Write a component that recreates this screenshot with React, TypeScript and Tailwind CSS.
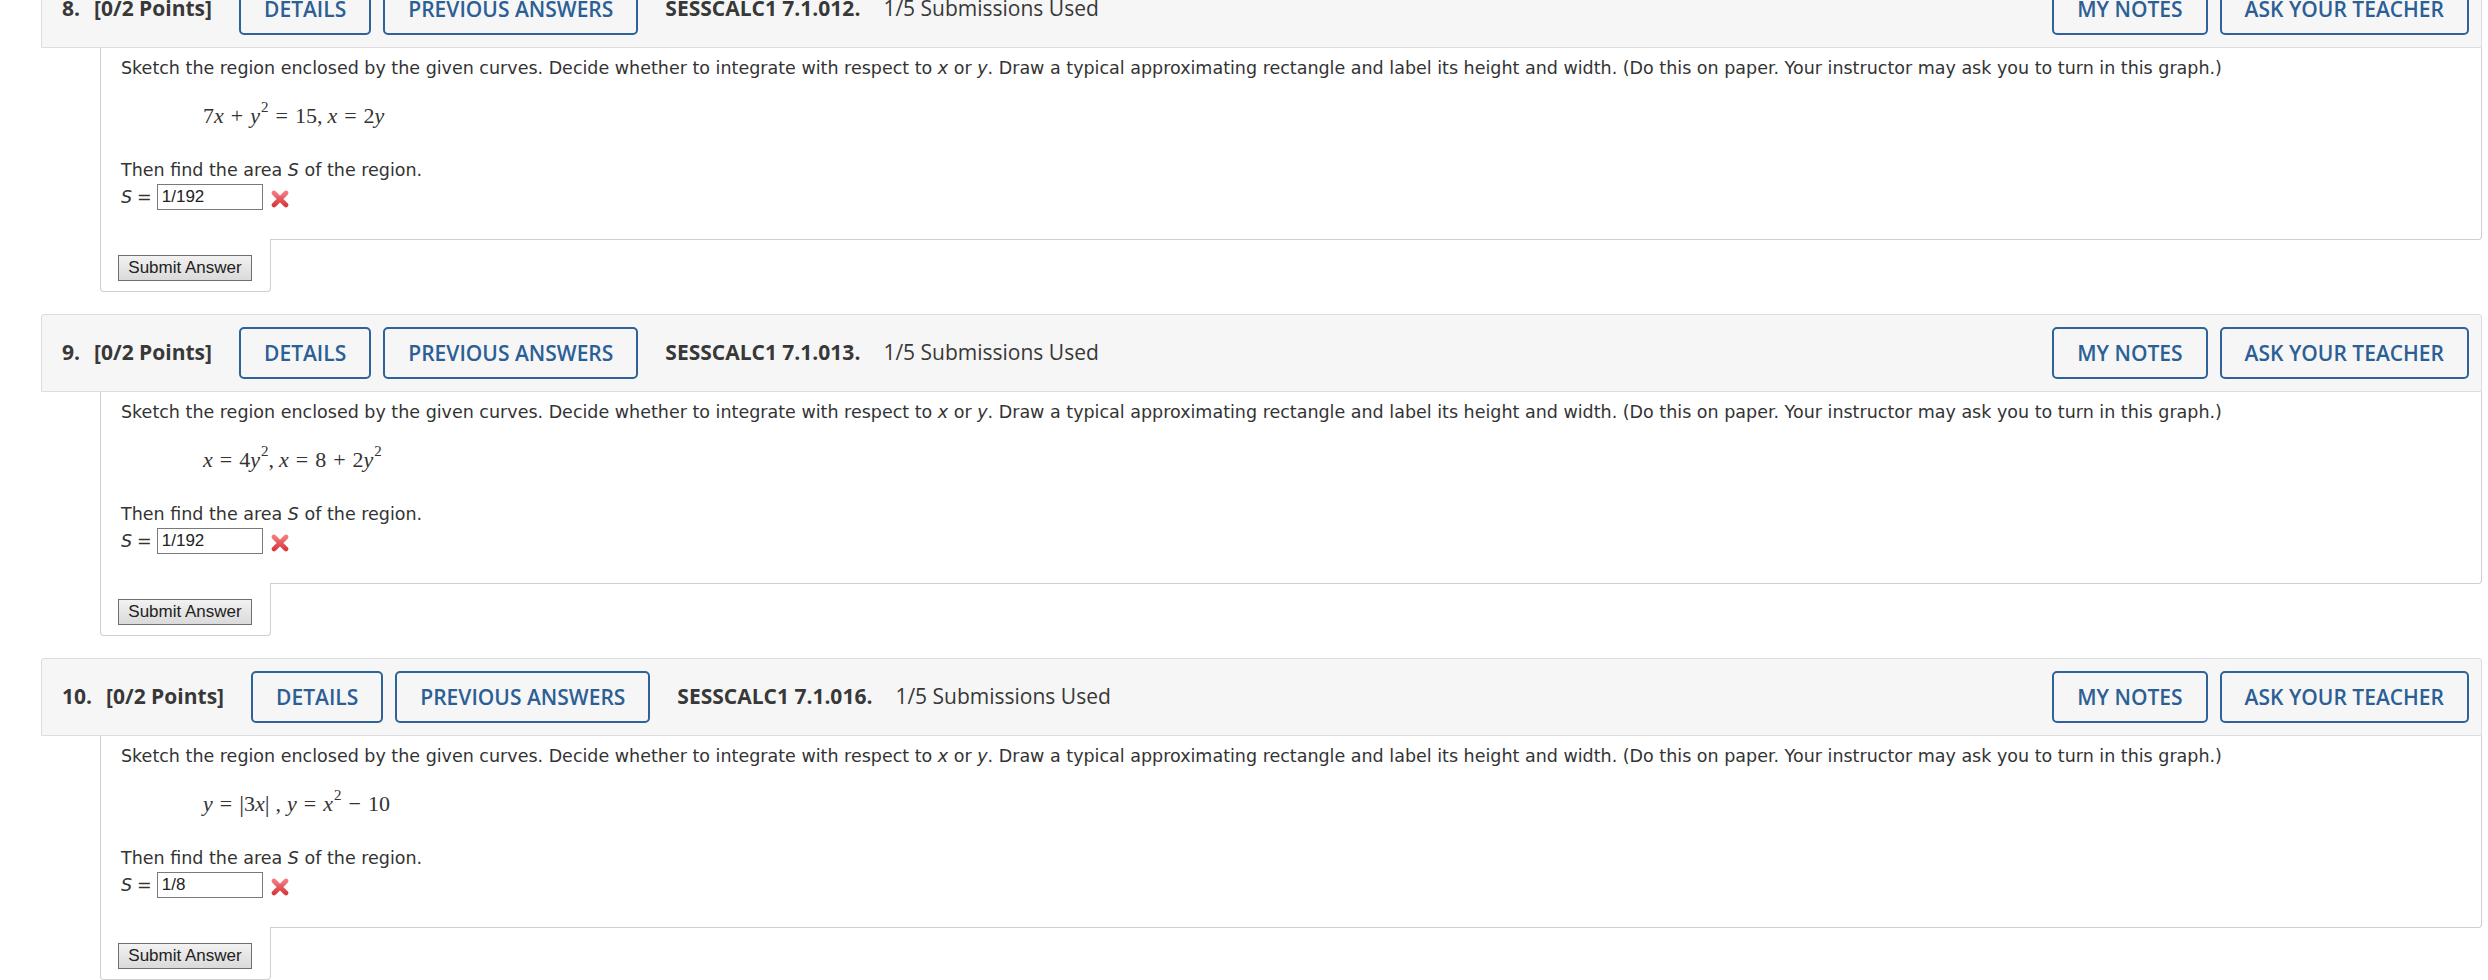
import React from "react";

const body = { fontFamily: '"DejaVu Sans", Verdana, sans-serif' };
const head = { fontFamily: '"Open Sans", sans-serif' };
const math = { fontFamily: '"Liberation Serif", "Times New Roman", serif' };
const arial = { fontFamily: '"Liberation Sans", Arial, sans-serif' };

function Btn({ children }: { children: React.ReactNode }) {
  return (
    <div className="h-[52px] flex items-center px-[23px] border-2 border-[#2d6399] rounded-[5px] text-[#2b5f95] text-[21px] font-semibold leading-none whitespace-nowrap">
      {children}
    </div>
  );
}

function Op({ children }: { children: React.ReactNode }) {
  return <span className="mx-[7px] not-italic">{children}</span>;
}

function Sup() {
  return <sup className="text-[15px] -top-[9px] ml-[1px]">2</sup>;
}

function XIcon() {
  return (
    <svg width="18" height="18" viewBox="0 0 18 18" className="ml-[8px] mt-[3px]">
      <defs>
        <linearGradient id="xg" x1="0" y1="0" x2="0" y2="1">
          <stop offset="0" stopColor="#f07a7c" />
          <stop offset="1" stopColor="#d93a3f" />
        </linearGradient>
      </defs>
      <path d="M3 3 L15 15 M15 3 L3 15" stroke="url(#xg)" strokeWidth="4.6" strokeLinecap="round" fill="none" />
    </svg>
  );
}

function Section({
  num,
  code,
  eq,
  answer,
}: {
  num: string;
  code: string;
  eq: React.ReactNode;
  answer: string;
}) {
  return (
    <div className="flex flex-col">
      <div
        className="ml-[41px] mr-[6px] h-[78px] bg-[#f6f6f6] border border-[#dcdcdc] rounded-t-[3px] flex items-center pl-[20px] pr-[12px] text-[#383838]"
        style={head}
      >
        <span className="text-[21px] font-bold mr-[14px]">{num}</span>
        <span className="text-[21px] font-bold mr-[27px]">[0/2 Points]</span>
        <div className="flex gap-[12px] mr-[27px]">
          <Btn>DETAILS</Btn>
          <Btn>PREVIOUS ANSWERS</Btn>
        </div>
        <span className="text-[21px] font-bold mr-[23px]">{code}</span>
        <span className="text-[21px]">1/5 Submissions Used</span>
        <div className="ml-auto flex gap-[12px]">
          <Btn>MY NOTES</Btn>
          <Btn>ASK YOUR TEACHER</Btn>
        </div>
      </div>
      <div className="ml-[100px] mr-[6px] flex flex-col">
        <div
          className="h-[192px] border-l border-r border-b border-[#cfcfcf] rounded-br-[4px] pl-[20px] pt-[8px] text-[17.5px] text-[#333] leading-[24px]"
          style={body}
        >
          <div className="whitespace-nowrap">
            Sketch the region enclosed by the given curves. Decide whether to integrate with respect to{" "}
            <i>x</i> or <i>y</i>. Draw a typical approximating rectangle and label its height and width. (Do
            this on paper. Your instructor may ask you to turn in this graph.)
          </div>
          <div className="mt-[22px] ml-[82px] h-[28px] flex items-center text-[22px] text-[#333]" style={math}>
            {eq}
          </div>
          <div className="mt-[28px]">
            Then find the area <i>S</i> of the region.
          </div>
          <div className="mt-[1px] h-[28px] flex items-center">
            <i>S</i>
            <span className="ml-[5px]">=</span>
            <div
              className="ml-[5px] w-[106px] h-[26px] border border-[#7a7a7a] flex items-center pl-[4px] text-[17px] text-[#222]"
              style={arial}
            >
              {answer}
            </div>
            <XIcon />
          </div>
        </div>
        <div className="relative -mt-px w-[171px] h-[53px] bg-white border-l border-r border-b border-[#cfcfcf] rounded-b-[4px] pt-[16px] pl-[17px]">
          <div
            className="w-[134px] h-[26px] border border-[#6f6f6f] bg-gradient-to-b from-[#f2f2f2] to-[#dadada] flex items-center justify-center text-[17px] text-[#222]"
            style={arial}
          >
            Submit Answer
          </div>
        </div>
      </div>
    </div>
  );
}

export default function App() {
  return (
    <div className="w-[2488px] h-[980px] overflow-hidden bg-white">
      <div className="-mt-[30px] flex flex-col gap-[22px]">
        <Section
          num="8."
          code="SESSCALC1 7.1.012."
          answer="1/192"
          eq={
            <>
              <span>7</span>
              <i>x</i>
              <Op>+</Op>
              <i>y</i>
              <Sup />
              <Op>=</Op>
              <span>15,</span>
              <i className="ml-[5px]">x</i>
              <Op>=</Op>
              <span>2</span>
              <i>y</i>
            </>
          }
        />
        <Section
          num="9."
          code="SESSCALC1 7.1.013."
          answer="1/192"
          eq={
            <>
              <i>x</i>
              <Op>=</Op>
              <span>4</span>
              <i>y</i>
              <Sup />
              <span>,</span>
              <i className="ml-[5px]">x</i>
              <Op>=</Op>
              <span>8</span>
              <Op>+</Op>
              <span>2</span>
              <i>y</i>
              <Sup />
            </>
          }
        />
        <Section
          num="10."
          code="SESSCALC1 7.1.016."
          answer="1/8"
          eq={
            <>
              <i>y</i>
              <Op>=</Op>
              <span className="text-[24px]">|</span>
              <span>3</span>
              <i>x</i>
              <span className="text-[24px]">|</span>
              <span className="ml-[6px]">,</span>
              <i className="ml-[6px]">y</i>
              <Op>=</Op>
              <i>x</i>
              <Sup />
              <Op>−</Op>
              <span>10</span>
            </>
          }
        />
      </div>
    </div>
  );
}
